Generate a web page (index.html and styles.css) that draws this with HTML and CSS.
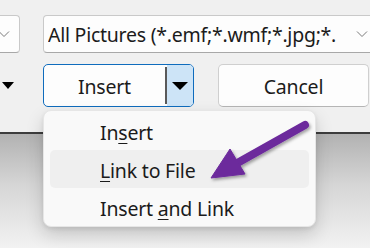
FILE: index.html
```html
<!DOCTYPE html>
<html>
<head>
<meta charset="utf-8">
<link rel="stylesheet" href="styles.css">
</head>
<body>
<div class="page">
  <div class="dialog">
    <div class="row row-top">
      <div class="combo combo-small">
        <svg class="chev" width="12" height="8" viewBox="0 0 12 8"><path d="M1 1.5 L6 6.5 L11 1.5" fill="none" stroke="#7a7a7a" stroke-width="1"/></svg>
      </div>
      <div class="combo combo-big">
        <span class="combo-text">All Pictures (*.emf;*.wmf;*.jpg;*.</span>
        <svg class="chev" width="12" height="8" viewBox="0 0 12 8"><path d="M1 1.5 L6 6.5 L11 1.5" fill="none" stroke="#7a7a7a" stroke-width="1"/></svg>
      </div>
    </div>
    <div class="row row-buttons">
      <div class="stub">
        <span class="tri"></span>
      </div>
      <div class="split">
        <div class="split-main">Insert</div>
        <div class="split-sep"></div>
        <div class="split-drop"><span class="tri"></span></div>
      </div>
      <div class="btn">Cancel</div>
    </div>
  </div>
  <div class="shade"></div>

  <div class="menu">
    <div class="item"><span>In<u>s</u>ert</span></div>
    <div class="item hot"><span><u>L</u>ink to File</span></div>
    <div class="item"><span>Insert <u>a</u>nd Link</span></div>
  </div>

  <svg class="arrow" width="370" height="248" viewBox="0 0 370 248">
    <defs>
      <filter id="sh" x="-20%" y="-20%" width="140%" height="140%">
        <feDropShadow dx="1.5" dy="2" stdDeviation="1.5" flood-color="#000" flood-opacity="0.35"/>
      </filter>
    </defs>
    <g filter="url(#sh)" fill="#6c2a9c" stroke="#6c2a9c">
      <line x1="305" y1="125" x2="232" y2="166" stroke-width="8" stroke-linecap="round"/>
      <polygon points="211,178 230,149 245,174" stroke-width="1" stroke-linejoin="round"/>
    </g>
  </svg>
</div>
</body>
</html>
```

FILE: styles.css
```css
* { box-sizing: border-box; }
html, body { margin: 0; padding: 0; }
body {
  width: 370px;
  height: 248px;
  overflow: hidden;
  font-family: "Noto Sans", "Open Sans", sans-serif;
  color: #1b1b1b;
  background: #f5f5f5;
}
.page { position: relative; width: 370px; height: 248px; overflow: hidden; }

.dialog {
  height: 134px;
  background: #f0f0f0;
  border-bottom: 2px solid #3d3d3d;
  padding-top: 15px;
}
.row { display: flex; }
.row-top { height: 38px; gap: 23px; }
.combo {
  flex-shrink: 0;
  height: 38px;
  background: #fdfdfd;
  border: 1px solid #c9c9c9;
  border-bottom-color: #a8a8a8;
  border-radius: 4px;
  display: flex;
  align-items: center;
}
.combo-small { width: 80px; margin-left: -60px; justify-content: flex-end; padding-right: 9px; }
.combo-big { width: 340px; padding-left: 4px; }
.combo-text {
  font-size: 19.5px;
  letter-spacing: -0.25px;
  flex: 1;
  white-space: nowrap;
  overflow: hidden;
}
.combo-big .chev { margin-right: 14px; margin-left: 12px; flex-shrink: 0; }

.row-buttons { margin-top: 11px; height: 43px; gap: 0; }
.stub { width: 43px; flex-shrink: 0; display: flex; align-items: center; padding-left: 2px; }
.tri {
  width: 0; height: 0;
  border-left: 6px solid transparent;
  border-right: 6px solid transparent;
  border-top: 7px solid #000;
}
.split {
  flex-shrink: 0;
  width: 151px;
  height: 43px;
  border: 1px solid #0f6cbd;
  border-radius: 5px;
  background: #fdfdfd;
  display: flex;
  overflow: hidden;
}
.split-main {
  flex: 1;
  display: flex; align-items: center; justify-content: center;
  font-size: 19.5px;
  letter-spacing: -0.2px;
  padding-top: 1px;
}
.split-sep { width: 2px; margin: 2px 0; background: #5a5a5a; }
.split-drop {
  width: 26px;
  background: #cde4f7;
  display: flex; align-items: center; justify-content: center;
}
.split-drop .tri { border-left-width: 8px; border-right-width: 8px; border-top-width: 8px; }
.btn {
  flex-shrink: 0;
  margin-left: 24px;
  width: 151px;
  height: 43px;
  border: 1px solid #cfcfcf;
  border-bottom-color: #b5b5b5;
  border-radius: 5px;
  background: #fdfdfd;
  display: flex; align-items: center; justify-content: center;
  font-size: 19.5px;
  letter-spacing: -0.2px;
  padding-top: 1px;
}

.shade {
  height: 114px;
  background: linear-gradient(to bottom, #b2b2b2 0%, #d6d6d6 45%, #f2f2f2 100%);
}

.menu {
  position: absolute;
  left: 43px;
  top: 110px;
  width: 273px;
  height: 117px;
  background: #f9f9f9;
  border: 1px solid #e6e6e6;
  border-radius: 8px;
  box-shadow: 0 8px 18px rgba(0,0,0,0.16), 0 2px 4px rgba(0,0,0,0.08);
  padding: 1px 6px 1px 6px;
}
.item {
  height: 38px;
  border-radius: 5px;
  padding-left: 50px;
  display: flex; align-items: center;
  font-size: 19.5px;
  letter-spacing: -0.2px;
  padding-top: 3px;
  white-space: nowrap;
}
.item u { text-underline-offset: 3px; text-decoration-thickness: 1px; }
.item.hot { background: #efefef; }

.arrow { position: absolute; left: 0; top: 0; }
```
